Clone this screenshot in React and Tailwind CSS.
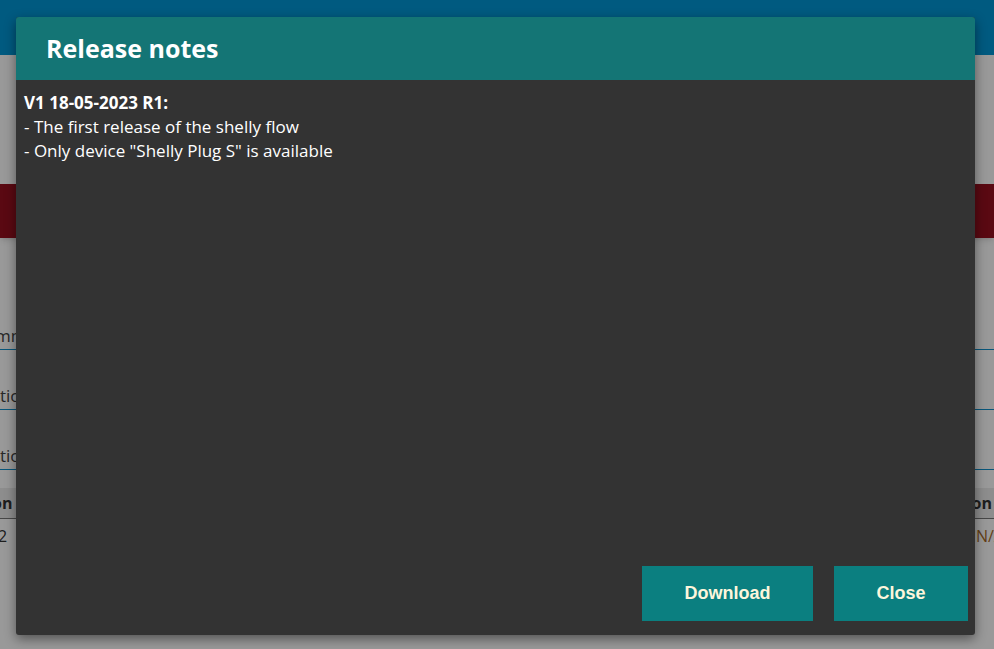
import React from 'react';

export default function App() {
  return (
    <div className="relative w-[994px] h-[649px] overflow-hidden bg-white" style={{ fontFamily: '"Open Sans", sans-serif' }}>
      {/* Page behind the dialog */}
      <div className="h-[55px] bg-[#0096d5]"></div>
      <div className="h-[129px]"></div>
      <div className="h-[54px] bg-[#960f1e] shadow-md"></div>

      <div className="mt-[86px] flex flex-col gap-[34px] text-[17px] text-[#444]">
        <div className="border-b border-[#1090cc] h-[26px] ml-[-26px] leading-[24px]">Comm</div>
        <div className="border-b border-[#1090cc] h-[26px] ml-[-19px] leading-[24px]">Actio</div>
        <div className="border-b border-[#1090cc] h-[26px] ml-[-19px] leading-[24px]">Actio</div>
      </div>

      <div className="mt-[18px] h-[31px] bg-[#ececec] border-b border-[#777] flex items-center justify-between text-[16px] font-bold text-[#333]">
        <span className="ml-[-8px]">on</span>
        <span className="mr-[2px]">on</span>
      </div>
      <div className="h-[34px] flex items-center justify-between text-[16px]">
        <span className="ml-[-2px] text-[#333]">2</span>
        <span className="mr-[-10px] text-[#a86a28]">N/A</span>
      </div>

      {/* Dim overlay */}
      <div className="absolute inset-0 bg-black/40"></div>

      {/* Dialog */}
      <div className="absolute left-[16px] top-[17px] w-[959px] h-[618px] rounded-[3px] bg-[#333333] shadow-[0_4px_12px_rgba(0,0,0,0.45)] flex flex-col overflow-hidden">
        <div className="h-[63px] bg-[#147575] flex items-center pl-[30px] shrink-0">
          <h2 className="text-[25px] font-bold text-white leading-none">Release notes</h2>
        </div>
        <div className="flex-1 px-[8px] pt-[11px] text-[17px] leading-[24px] text-white">
          <div className="font-bold">V1 18-05-2023 R1:</div>
          <div>- The first release of the shelly flow</div>
          <div>- Only device "Shelly Plug S" is available</div>
        </div>
        <div className="flex justify-end gap-[21px] pr-[7px] pb-[14px]" style={{ fontFamily: '"Liberation Sans", Arial, sans-serif' }}>
          <button className="w-[171px] h-[55px] bg-[#0b7f80] text-[#fdf6dc] font-bold text-[18px]">Download</button>
          <button className="w-[134px] h-[55px] bg-[#0b7f80] text-[#fdf6dc] font-bold text-[18px]">Close</button>
        </div>
      </div>
    </div>
  );
}
